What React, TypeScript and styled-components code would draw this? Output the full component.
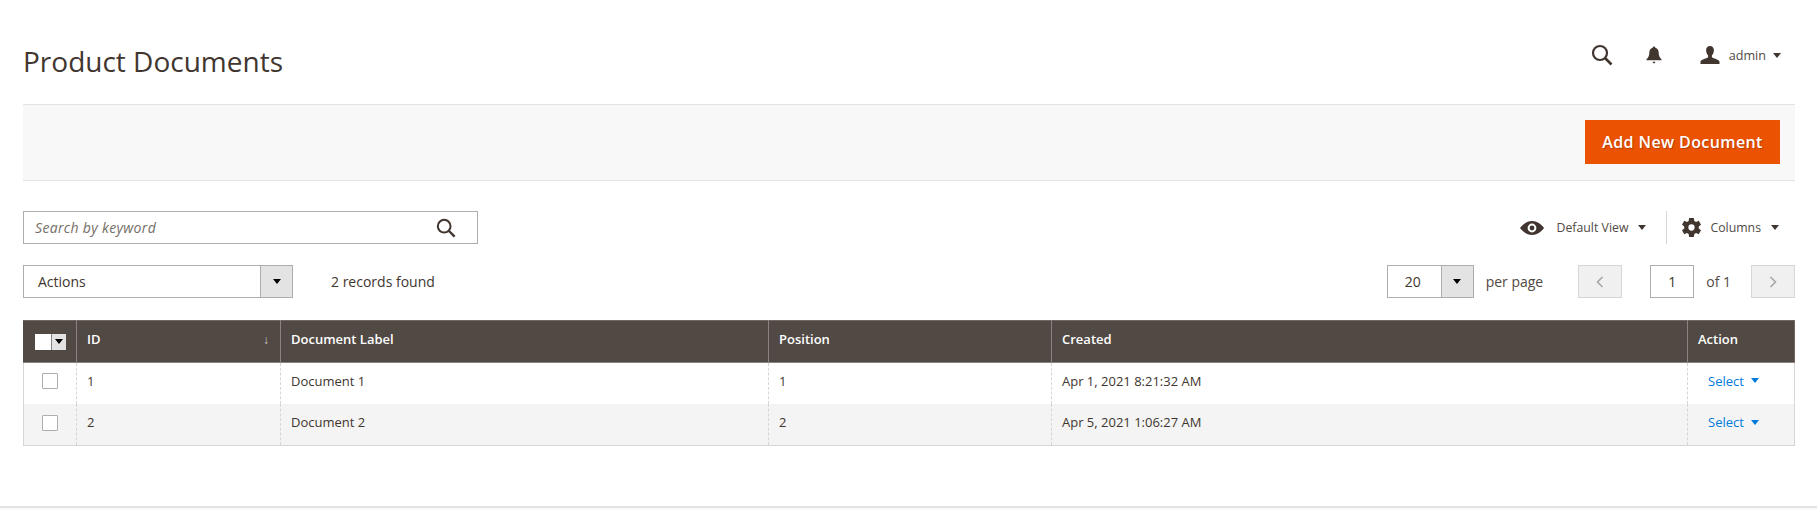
import styled, { createGlobalStyle } from 'styled-components'

const GlobalStyle = createGlobalStyle`
  html, body { margin: 0; padding: 0; background: #fff; }
  body { font-family: "Open Sans", "Noto Sans", sans-serif; color: #41362f; font-size: 14px; }
  * { box-sizing: border-box; }
`

const Page = styled.div`
  height: 510px;
  display: flex;
  flex-direction: column;
  overflow: hidden;
`

const Main = styled.main`
  height: 506px;
  padding: 0 22px 0 23px;
  display: flex;
  flex-direction: column;
`

const Footer = styled.footer`
  height: 4px;
  background: #f9f9f9;
  border-top: 2px solid #e3e3e3;
`

const Header = styled.header`
  height: 104px;
  display: flex;
  align-items: flex-start;
  justify-content: space-between;
  padding-top: 43px;
`

const Title = styled.h1`
  margin: 0;
  font-size: 28px;
  font-weight: 400;
  line-height: 36px;
  color: #41362f;
`

const HeaderTools = styled.div`
  display: flex;
  align-items: center;
  height: 24px;
  padding-right: 14px;
`

const HeaderIcon = styled.span<{ $gap: number }>`
  display: flex;
  margin-right: ${(p) => p.$gap}px;
`

const AdminName = styled.span`
  font-size: 12.6px;
  color: #514943;
  margin: 0 7px 0 9px;
`

const Caret = styled.span<{ $color?: string }>`
  display: inline-block;
  width: 0;
  height: 0;
  border-left: 4px solid transparent;
  border-right: 4px solid transparent;
  border-top: 5px solid ${(p) => p.$color ?? '#41362f'};
`

const ActionsBar = styled.div`
  height: 77px;
  background: #f8f8f8;
  border-top: 1px solid #e3e3e3;
  border-bottom: 1px solid #e3e3e3;
  display: flex;
  align-items: flex-start;
  justify-content: flex-end;
  padding: 15px 15px 0 0;
`

const PrimaryButton = styled.button`
  width: 195px;
  height: 44px;
  border: 1px solid #eb5202;
  background: #eb5202;
  color: #fff;
  font-family: inherit;
  font-size: 16px;
  font-weight: 600;
  letter-spacing: 0.4px;
  text-shadow: 1px 1px 1px rgba(0, 0, 0, 0.25);
  padding: 0;
`

const Toolbar = styled.div`
  display: flex;
  justify-content: space-between;
  align-items: center;
  height: 33px;
`

const SearchRow = styled(Toolbar)`
  margin-top: 30px;
  padding-right: 16px;
`

const SearchBox = styled.div`
  width: 455px;
  height: 33px;
  border: 1px solid #adadad;
  display: flex;
  align-items: center;
  justify-content: space-between;
  padding: 0 21px 0 11px;
  font-size: 14px;
  font-style: italic;
  letter-spacing: 0.33px;
  color: #746e68;
`

const ViewTools = styled.div`
  display: flex;
  align-items: center;
  font-size: 12.3px;
  color: #514943;
`

const ViewLabel = styled.span<{ $left: number; $right: number }>`
  margin: 0 ${(p) => p.$right}px 0 ${(p) => p.$left}px;
`

const ToolDivider = styled.span`
  width: 1px;
  height: 33px;
  background: #d6d6d6;
  margin: 0 15px 0 20px;
`

const ControlsRow = styled(Toolbar)`
  margin-top: 21px;
`

const ControlsGroup = styled.div`
  display: flex;
  align-items: center;
`

const SelectBox = styled.div<{ $width: number; $textInset: number }>`
  width: ${(p) => p.$width}px;
  height: 33px;
  border: 1px solid #adadad;
  display: flex;
  align-items: stretch;
  font-size: 14px;
  color: #41362f;
  > span:first-child {
    flex: 1;
    display: flex;
    align-items: center;
    padding-left: ${(p) => p.$textInset}px;
  }
`

const SelectArrow = styled.span`
  width: 32px;
  background: #e3e3e3;
  border-left: 1px solid #adadad;
  display: flex;
  align-items: center;
  justify-content: center;
`

const RecordsText = styled.span`
  margin-left: 38px;
  font-size: 14px;
  color: #41362f;
`

const PerPage = styled.span`
  margin: 0 35px 0 12px;
  font-size: 14px;
  color: #514943;
`

const PagerButton = styled.span`
  width: 44px;
  height: 33px;
  background: #f0f0f0;
  border: 1px solid #d6d6d6;
  display: flex;
  align-items: center;
  justify-content: center;
`

const PageInput = styled.span`
  width: 44px;
  height: 33px;
  margin-left: 28px;
  border: 1px solid #adadad;
  display: flex;
  align-items: center;
  justify-content: center;
  font-size: 14px;
`

const PageTotal = styled.span`
  margin: 0 20px 0 12px;
  font-size: 14px;
  color: #514943;
`

const Table = styled.table`
  margin-top: 22px;
  width: 100%;
  border-collapse: collapse;
  table-layout: fixed;
  font-size: 13px;
`

const HeadCell = styled.th<{ $width?: number }>`
  width: ${(p) => (p.$width ? `${p.$width}px` : 'auto')};
  height: 42px;
  padding: 0 10px 5px;
  background: #514943;
  color: #fff;
  font-size: 13px;
  font-weight: 600;
  text-align: left;
  border: 1px solid #8a837f;
  border-top-color: #6f6762;
  &:first-child { border-left-color: #514943; padding: 0; }
  &:last-child { border-right-color: #6f6762; }
`

const SortCell = styled.div`
  display: flex;
  justify-content: space-between;
  align-items: center;
`

const SortArrow = styled.span`
  font-size: 12px;
  font-weight: 400;
  color: #d0cdcb;
  margin-right: 1px;
`

const Row = styled.tr<{ $alt?: boolean }>`
  background: ${(p) => (p.$alt ? '#f4f4f4' : '#fff')};
`

const Cell = styled.td`
  height: 42px;
  padding: 0 10px 4px;
  color: #41362f;
  font-size: 13px;
  border-left: 1px dashed #d6d6d6;
  border-bottom: 1px solid #d6d6d6;
  &:first-child { border-left: 1px solid #d6d6d6; padding: 0 0 3px; }
  &:last-child { border-right: 1px solid #d6d6d6; }
  tr:first-child > & { border-bottom: 0; height: 41px; padding-bottom: 5px; }
`

const CheckBox = styled.span`
  display: block;
  width: 16px;
  height: 16px;
  margin: 0 auto;
  background: #fff;
  border: 1px solid #adadad;
  border-radius: 1px;
`

const HeaderCheck = styled.div`
  width: 31px;
  height: 16px;
  margin: 0 auto;
  display: flex;
  background: #fff;
`

const HeaderCheckArrow = styled.span`
  margin-left: auto;
  width: 15px;
  background: #e3e3e3;
  border-left: 1px solid #8a837f;
  display: flex;
  align-items: center;
  justify-content: center;
`

const SelectLink = styled.a`
  display: inline-flex;
  align-items: center;
  gap: 7px;
  margin-left: 10px;
  color: #007bdb;
`

const SearchIcon = ({ size }: { size: number }) => (
  <svg width={size} height={size} viewBox="0 0 22 22" fill="none">
    <circle cx="9" cy="9" r="7" stroke="#41362f" strokeWidth="2.2" />
    <path d="M14 14l6.5 6.5" stroke="#41362f" strokeWidth="2.6" />
  </svg>
)

const BellIcon = () => (
  <svg width="16" height="18" viewBox="0 0 16 18" fill="#41362f">
    <path d="M8 0.5c.8 0 1.3.6 1.3 1.3 2.3.6 3.4 2.5 3.4 5 0 3.2 1 4.7 2.8 6.4v1H.5v-1c1.8-1.7 2.8-3.2 2.8-6.4 0-2.5 1.1-4.4 3.4-5C6.700 1.100 7.200.5 8 .5z" />
    <path d="M6.600 15.800h2.800c0 .9-.6 1.500-1.400 1.500s-1.400-.6-1.400-1.500z" />
  </svg>
)

const UserIcon = () => (
  <svg width="20" height="18" viewBox="0 0 20 18" fill="#41362f">
    <path d="M10 0c2.500 0 3.900 1.800 3.900 4.300 0 2.200-.9 4.300-2 5.200v1.700c.5.9 6.900 2 7.600 4.300V18H.5v-2.500c.7-2.300 7.100-3.400 7.600-4.300V9.500c-1.100-.9-2-3-2-5.200C6.100 1.800 7.500 0 10 0z" />
  </svg>
)

const EyeIcon = () => (
  <svg width="24" height="14" viewBox="0 0 24 14">
    <path fill="#41362f" d="M12 0c5 0 9 3.200 12 7-3 3.800-7 7-12 7S3 10.800 0 7c3-3.800 7-7 12-7z" />
    <circle cx="12" cy="7" r="4.400" fill="#fff" />
    <circle cx="12" cy="7" r="2.400" fill="#41362f" />
  </svg>
)

const GearIcon = () => (
  <svg width="19" height="19" viewBox="2.300 2.300 19.400 19.400" fill="#41362f">
    <path d="M19.400 13a7.800 7.800 0 0 0 0-2l2.300-1.800-2.300-4-2.800 1.100a7.600 7.600 0 0 0-1.700-1L14.400 2.300H9.600L9.100 5.300a7.600 7.600 0 0 0-1.700 1L4.600 5.200l-2.300 4L4.600 11a7.800 7.800 0 0 0 0 2l-2.300 1.800 2.300 4 2.800-1.100a7.600 7.600 0 0 0 1.700 1l.5 3h4.800l.5-3a7.600 7.600 0 0 0 1.700-1l2.800 1.100 2.300-4zM12 15.200a3.200 3.200 0 1 1 0-6.400 3.200 3.200 0 0 1 0 6.400z" />
  </svg>
)

const Chevron = ({ flip }: { flip?: boolean }) => (
  <svg width="8" height="12" viewBox="0 0 8 12" fill="none">
    <path d={flip ? 'M1.500 1l5 5-5 5' : 'M6.500 1l-5 5 5 5'} stroke="#a9a5a2" strokeWidth="1.600" />
  </svg>
)

const rows = [
  { id: 1, label: 'Document 1', position: 1, created: 'Apr 1, 2021 8:21:32 AM' },
  { id: 2, label: 'Document 2', position: 2, created: 'Apr 5, 2021 1:06:27 AM' },
]

export default function App() {
  return (
    <Page>
      <GlobalStyle />
      <Main>
        <Header>
          <Title>Product Documents</Title>
          <HeaderTools>
            <HeaderIcon $gap={33}><SearchIcon size={22} /></HeaderIcon>
            <HeaderIcon $gap={38}><BellIcon /></HeaderIcon>
            <UserIcon />
            <AdminName>admin</AdminName>
            <Caret />
          </HeaderTools>
        </Header>
        <ActionsBar>
          <PrimaryButton>Add New Document</PrimaryButton>
        </ActionsBar>
        <SearchRow>
          <SearchBox>
            Search by keyword
            <SearchIcon size={20} />
          </SearchBox>
          <ViewTools>
            <EyeIcon />
            <ViewLabel $left={13} $right={10}>Default View</ViewLabel>
            <Caret />
            <ToolDivider />
            <GearIcon />
            <ViewLabel $left={9} $right={10}>Columns</ViewLabel>
            <Caret />
          </ViewTools>
        </SearchRow>
        <ControlsRow>
          <ControlsGroup>
            <SelectBox $width={270} $textInset={14}>
              <span>Actions</span>
              <SelectArrow><Caret $color="#000" /></SelectArrow>
            </SelectBox>
            <RecordsText>2 records found</RecordsText>
          </ControlsGroup>
          <ControlsGroup>
            <SelectBox $width={87} $textInset={17}>
              <span>20</span>
              <SelectArrow><Caret $color="#000" /></SelectArrow>
            </SelectBox>
            <PerPage>per page</PerPage>
            <PagerButton><Chevron /></PagerButton>
            <PageInput>1</PageInput>
            <PageTotal>of 1</PageTotal>
            <PagerButton><Chevron flip /></PagerButton>
          </ControlsGroup>
        </ControlsRow>
        <Table>
          <thead>
            <tr>
              <HeadCell $width={53}>
                <HeaderCheck>
                  <HeaderCheckArrow><Caret $color="#000" /></HeaderCheckArrow>
                </HeaderCheck>
              </HeadCell>
              <HeadCell $width={204}>
                <SortCell><span>ID</span><SortArrow>↓</SortArrow></SortCell>
              </HeadCell>
              <HeadCell $width={488}>Document Label</HeadCell>
              <HeadCell $width={283}>Position</HeadCell>
              <HeadCell $width={636}>Created</HeadCell>
              <HeadCell>Action</HeadCell>
            </tr>
          </thead>
          <tbody>
            {rows.map((r, i) => (
              <Row key={r.id} $alt={i % 2 === 1}>
                <Cell><CheckBox /></Cell>
                <Cell>{r.id}</Cell>
                <Cell>{r.label}</Cell>
                <Cell>{r.position}</Cell>
                <Cell>{r.created}</Cell>
                <Cell>
                  <SelectLink>Select <Caret $color="#007bdb" /></SelectLink>
                </Cell>
              </Row>
            ))}
          </tbody>
        </Table>
      </Main>
      <Footer />
    </Page>
  )
}
